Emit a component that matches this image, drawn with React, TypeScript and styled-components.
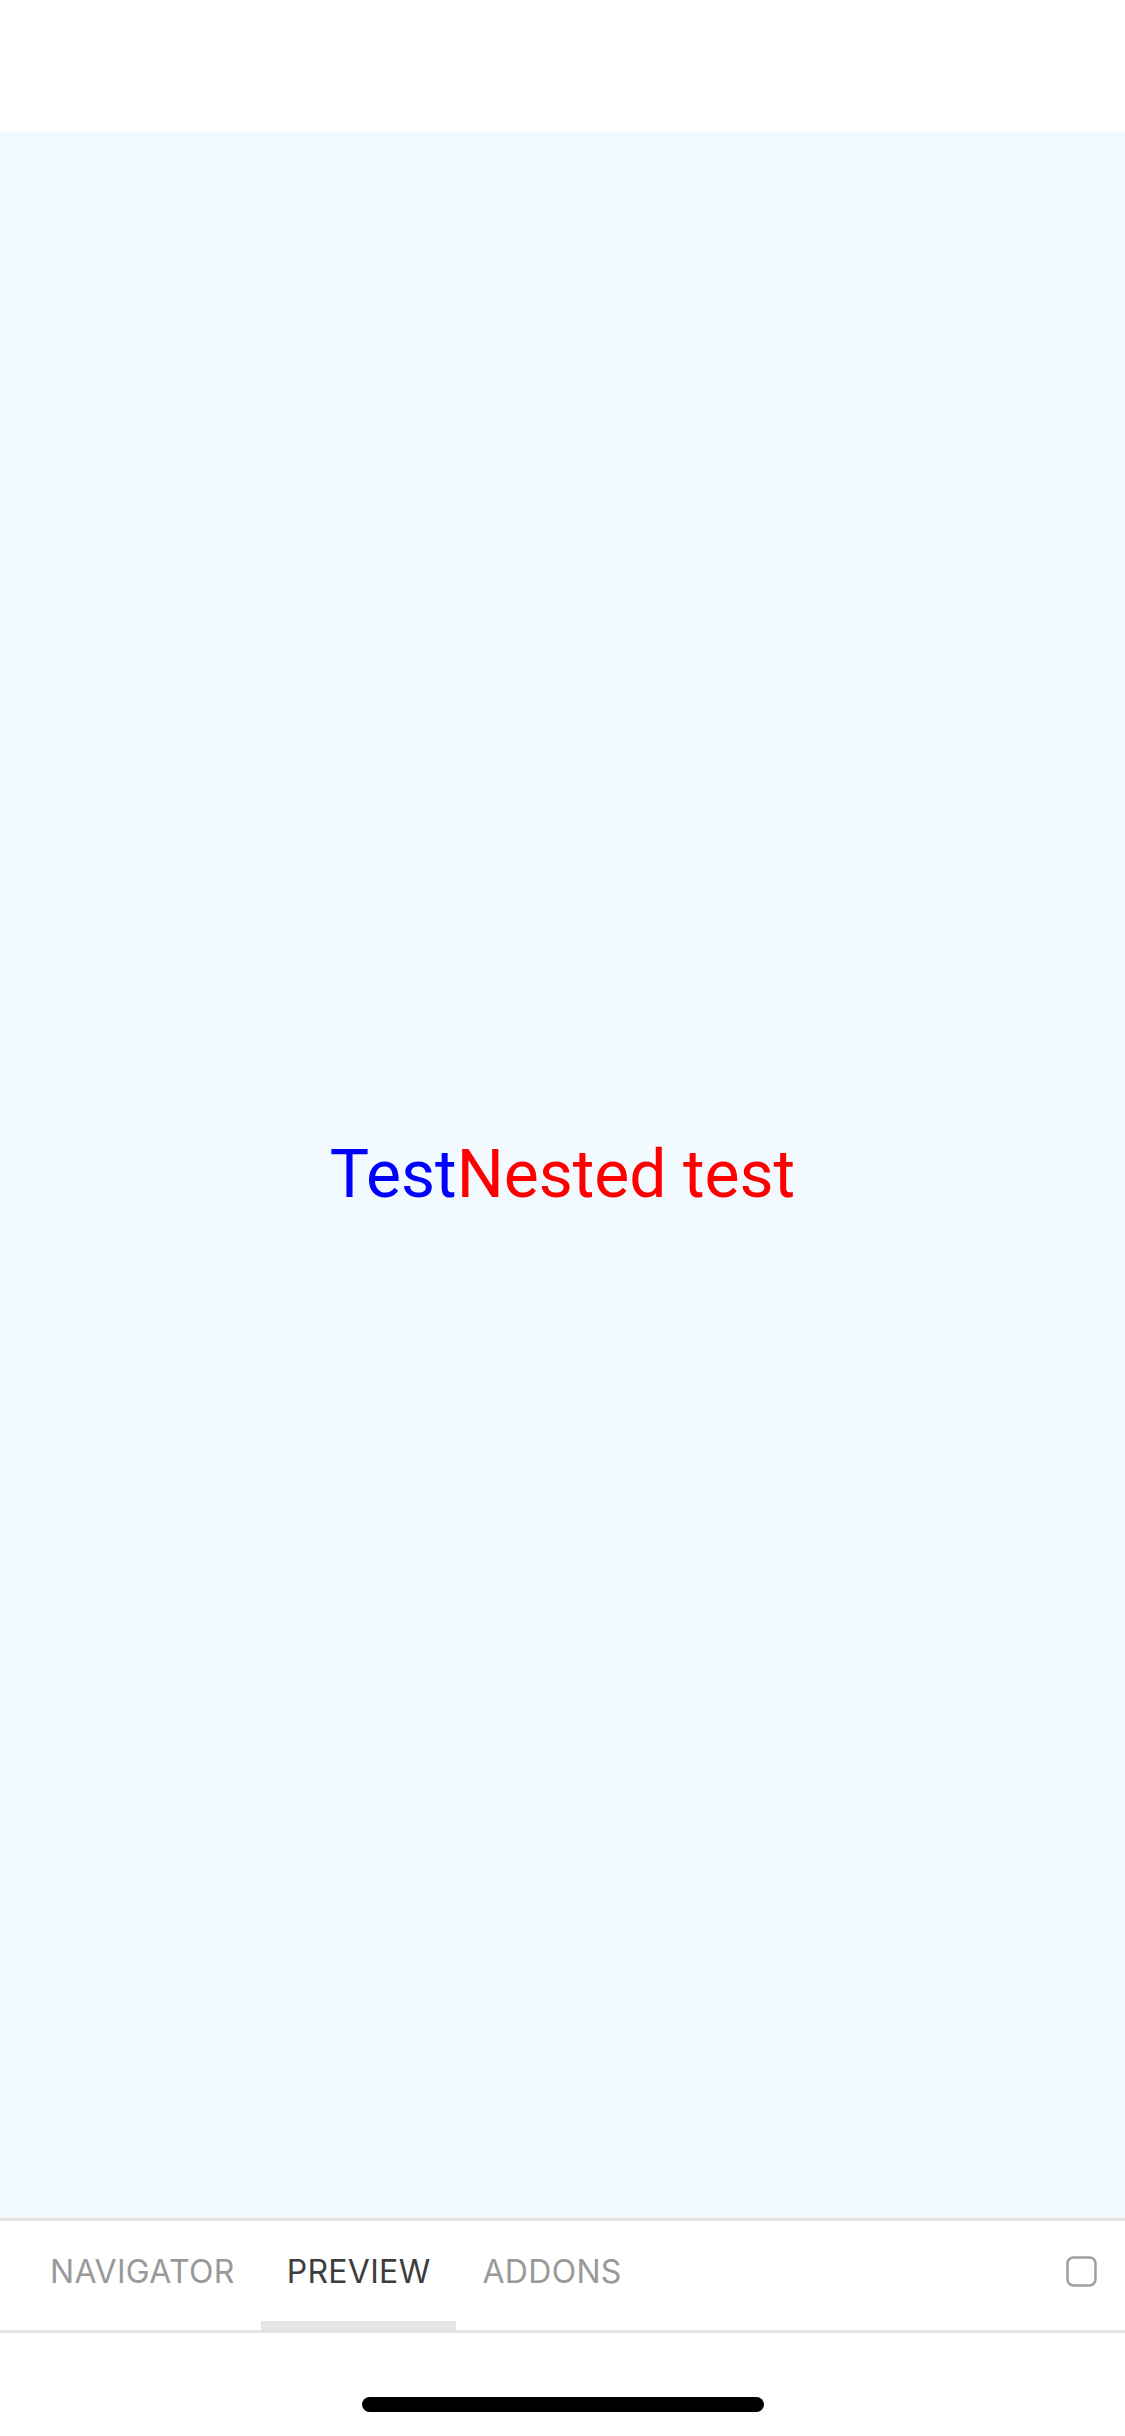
import React from "react";
import styled, { createGlobalStyle } from "styled-components";

const Global = createGlobalStyle`
  html, body { margin: 0; padding: 0; background: #ffffff; }
  #root { min-height: 2436px; }
`;

const Screen = styled.div`
  width: 1125px;
  height: 2436px;
  display: flex;
  flex-direction: column;
  background: #ffffff;
`;

const StatusArea = styled.div`
  height: 132px;
  flex: none;
  background: #ffffff;
`;

const Canvas = styled.main`
  flex: 1;
  background: #f3faff;
  display: flex;
  align-items: center;
  justify-content: center;
`;

const Headline = styled.div`
  font-family: Roboto, "Liberation Sans", sans-serif;
  font-size: 66px;
  line-height: 1;
`;

const Colored = styled.span<{ $color: string }>`
  color: ${(p) => p.$color};
`;

const TabBar = styled.nav`
  flex: none;
  height: 109px;
  border-top: 3px solid #e5e5e5;
  border-bottom: 3px solid #e5e5e5;
  background: #ffffff;
  display: flex;
  align-items: stretch;
  padding: 0 28px 0 24px;
`;

const Tab = styled.div<{ $active?: boolean }>`
  position: relative;
  display: flex;
  align-items: center;
  padding: 0 26px 9px;
  font-family: Inter, Roboto, "Liberation Sans", sans-serif;
  font-size: 32px;
  letter-spacing: 0.3px;
  color: ${(p) => (p.$active ? "#3d3d3d" : "#999999")};
  &::after {
    content: "";
    display: ${(p) => (p.$active ? "block" : "none")};
    position: absolute;
    left: 0;
    right: 0;
    bottom: 0;
    height: 9px;
    background: #e5e5e5;
  }
`;

const Spacer = styled.div`
  flex: 1;
`;

const IconBox = styled.div`
  display: flex;
  align-items: center;
  padding-bottom: 9px;
`;

const HomeArea = styled.div`
  flex: none;
  height: 103px;
  display: flex;
  justify-content: center;
  padding-top: 64px;
  box-sizing: border-box;
`;

const HomeIndicator = styled.div`
  width: 402px;
  height: 15px;
  border-radius: 8px;
  background: #000000;
`;

export default function App() {
  return (
    <>
      <Global />
      <Screen>
        <StatusArea />
        <Canvas>
          <Headline>
            <Colored $color="#0000ff">Test</Colored>
            <Colored $color="#ff0000">Nested test</Colored>
          </Headline>
        </Canvas>
        <TabBar>
          <Tab>NAVIGATOR</Tab>
          <Tab $active>PREVIEW</Tab>
          <Tab>ADDONS</Tab>
          <Spacer />
          <IconBox>
            <svg width="31" height="31" viewBox="0 0 31 31">
              <rect x="1.5" y="1.5" width="28" height="28" rx="6" fill="none" stroke="#a0a0a0" strokeWidth="2.5" />
            </svg>
          </IconBox>
        </TabBar>
        <HomeArea>
          <HomeIndicator />
        </HomeArea>
      </Screen>
    </>
  );
}
